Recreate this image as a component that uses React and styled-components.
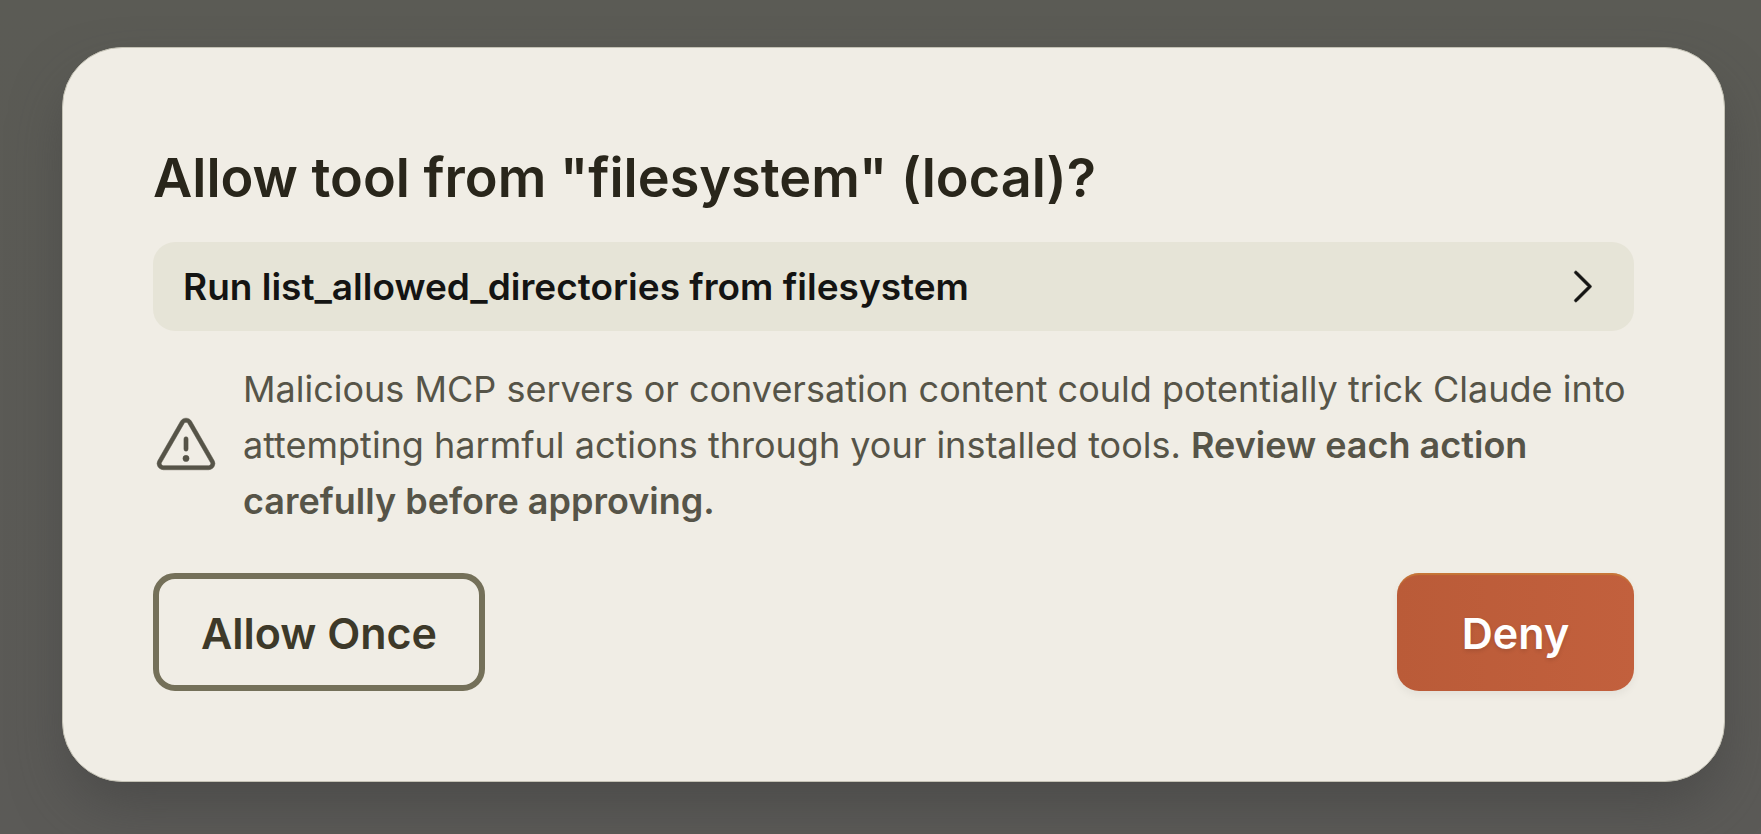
import React from 'react';
import styled, { createGlobalStyle } from 'styled-components';
import { PiCaretRight, PiWarning } from 'react-icons/pi';

const App = () => {
  return (
    <>
      <GlobalStyle />
      <Backdrop>
        <Dialog role="dialog" aria-labelledby="dialog-title">
          <Title id="dialog-title">Allow tool from "filesystem" (local)?</Title>
          <ToolRow type="button" aria-expanded="false">
            <span>Run list_allowed_directories from filesystem</span>
            <PiCaretRight size={45} />
          </ToolRow>
          <Warning>
            <PiWarning size={66} />
            <WarningText>
              Malicious MCP servers or conversation content could potentially trick Claude into
              attempting harmful actions through your installed tools.{' '}
              <strong>Review each action carefully before approving.</strong>
            </WarningText>
          </Warning>
          <Actions>
            <AllowButton type="button">Allow Once</AllowButton>
            <DenyButton type="button">Deny</DenyButton>
          </Actions>
        </Dialog>
      </Backdrop>
    </>
  );
};

export default App;

const GlobalStyle = createGlobalStyle`
  * {
    box-sizing: border-box;
  }

  body {
    margin: 0;
    font-family: Inter, "Liberation Sans", sans-serif;
  }
`;

const Backdrop = styled.div`
  min-height: 100vh;
  padding: 47px 36px 52px 62px;
  background: linear-gradient(#5b5b55, #5b5a57);
`;

const Dialog = styled.main`
  display: flex;
  flex-direction: column;
  padding: 90px;
  background: #f0ede5;
  border: 1px solid #c4c2b5;
  border-radius: 60px;
  box-shadow: 0 28px 56px -8px rgba(64, 64, 64, 0.6);
`;

const Title = styled.h1`
  margin: 0 0 24px;
  color: #29261b;
  font-size: 54px;
  font-weight: 600;
  line-height: 80px;
`;

const ToolRow = styled.button`
  display: flex;
  justify-content: space-between;
  align-items: center;
  width: 100%;
  height: 89px;
  margin-bottom: 30px;
  padding: 0 30px;
  background: #e6e4d7;
  border: none;
  border-radius: 22px;
  color: #141413;
  font-family: inherit;
  font-size: 37px;
  font-weight: 600;
  cursor: pointer;

  svg {
    stroke: currentColor;
    stroke-width: 4;
  }
`;

const Warning = styled.div`
  display: flex;
  align-items: center;
  gap: 24px;
  margin-bottom: 44px;
  color: #565448;

  svg {
    flex-shrink: 0;
    stroke: currentColor;
    stroke-width: 2;
  }
`;

const WarningText = styled.p`
  margin: 0;
  font-size: 36px;
  line-height: 56px;

  strong {
    font-weight: 600;
  }
`;

const Actions = styled.div`
  display: flex;
  justify-content: space-between;
`;

const Button = styled.button`
  height: 118px;
  padding: 2px 0 0;
  border-radius: 22px;
  font-family: inherit;
  font-size: 43px;
  font-weight: 600;
  cursor: pointer;
`;

const AllowButton = styled(Button)`
  min-width: 332px;
  background: transparent;
  border: 6px solid #747059;
  color: #3d3929;
`;

const DenyButton = styled(Button)`
  min-width: 237px;
  background: linear-gradient(to right, #ba5b38, #c2603d);
  border: none;
  color: #ffffff;
  text-shadow: 0 2px 4px rgba(0, 0, 0, 0.12);
  box-shadow: inset 0 3px 1px -1px rgba(205, 135, 55, 0.6), 0 4px 8px rgba(0, 0, 0, 0.05);
`;
